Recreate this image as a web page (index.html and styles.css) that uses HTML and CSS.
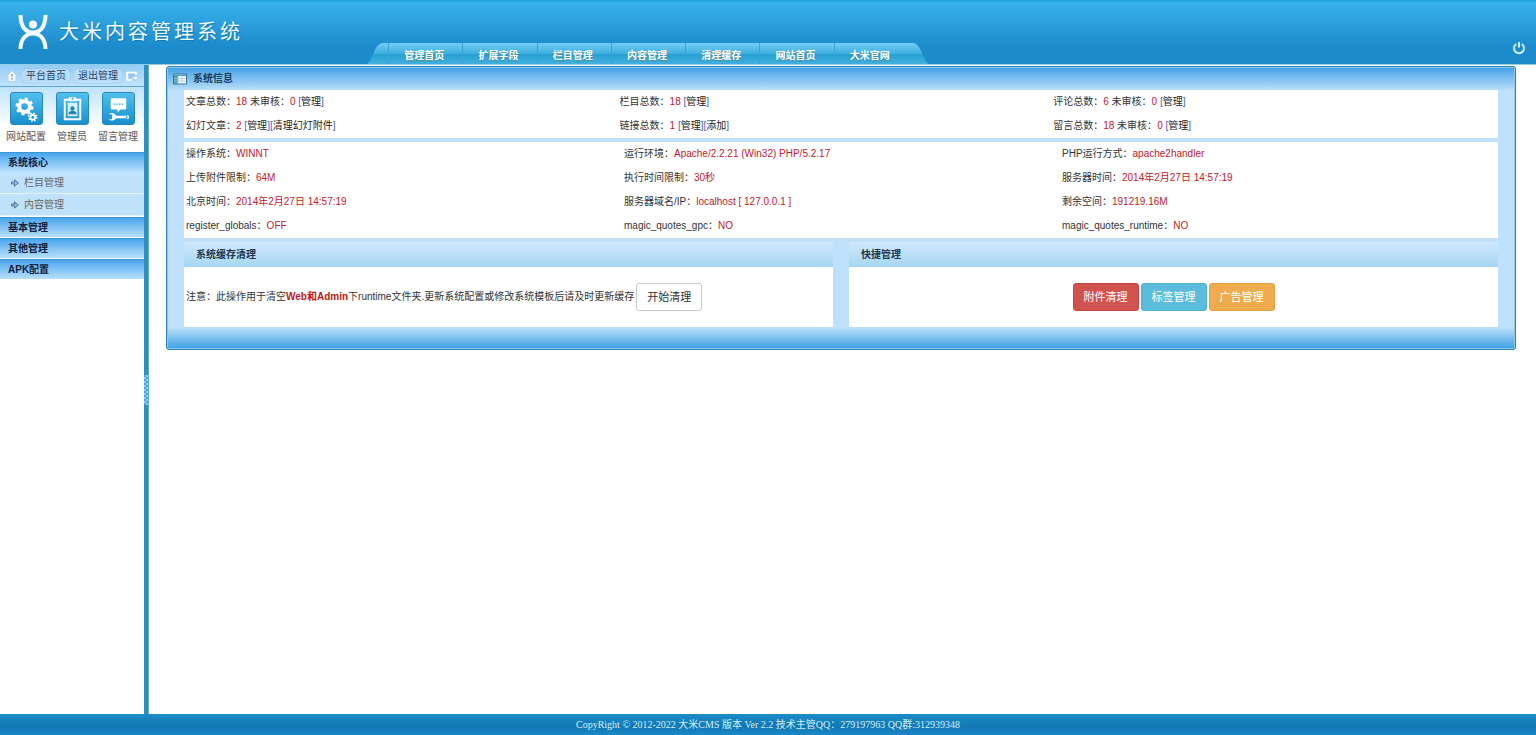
FILE: index.html
```html
<!DOCTYPE html>
<html lang="zh-CN">
<head>
<meta charset="utf-8">
<title>大米内容管理系统</title>
<link rel="stylesheet" href="styles.css">
</head>
<body>
<header class="header">
  <div class="brand">
    <svg class="logo" viewBox="0 0 30 34" aria-hidden="true">
      <path d="M2.500 0C2.500 12 8 17.500 15 17.500S27.500 12 27.500 0M2.500 34C2.500 24 8 18.500 15 18.500S27.500 24 27.500 34" fill="none" stroke="#f4fcff" stroke-width="4"/>
      <circle cx="15" cy="9.500" r="4" fill="#f4fcff"/>
    </svg>
    <h1 class="title">大米内容管理系统</h1>
  </div>
  <nav class="nav">
    <svg class="nav-end" viewBox="0 0 21 21" preserveAspectRatio="none" aria-hidden="true">
      <defs><linearGradient id="tab" x1="0" y1="0" x2="0" y2="1"><stop offset="0" stop-color="#72ccf6"/><stop offset=".5" stop-color="#3fb0df"/><stop offset=".55" stop-color="#27a0d2"/><stop offset="1" stop-color="#41b0df"/></linearGradient></defs>
      <path d="M0 21C6 18 7 0 16 0H21V21Z" fill="url(#tab)"/>
    </svg>
    <ul class="tabs">
      <li><a href="#">管理首页</a></li>
      <li><a href="#">扩展字段</a></li>
      <li><a href="#">栏目管理</a></li>
      <li><a href="#">内容管理</a></li>
      <li><a href="#">清理缓存</a></li>
      <li><a href="#">网站首页</a></li>
      <li><a href="#">大米官网</a></li>
    </ul>
    <svg class="nav-end" viewBox="0 0 21 21" preserveAspectRatio="none" aria-hidden="true">
      <path d="M21 21C15 18 13 0 5 0H0V21Z" fill="url(#tab)"/>
    </svg>
  </nav>
  <button class="power" type="button" aria-label="退出">
    <svg viewBox="0 0 14 14"><path d="M4.300 3A5 5 0 1 0 9.700 3M7 1V6.500" fill="none" stroke="#c9eefc" stroke-width="2"/></svg>
  </button>
</header>

<div class="body">
  <aside class="sidebar">
    <div class="quickbar">
      <svg class="mini" viewBox="0 0 12 12" aria-hidden="true"><path d="M.5 6.500 6 .8 11.500 6.500H9.800V11.300H2.200V6.500Z" fill="#fff" stroke="#a5cbe6" stroke-width=".7"/><path d="M6 4V6.500M6 8V9.500" stroke="#5a9fd0" stroke-width="1.500" fill="none"/></svg>
      <a class="pill" href="#">平台首页</a>
      <a class="pill" href="#">退出管理</a>
      <svg class="mini" viewBox="0 0 12 12" aria-hidden="true"><path d="M10 5V2.500H1V10H6" fill="none" stroke="#fff" stroke-width="1.500"/><path d="M3 5H8M3 7.500H6" stroke="#7fb4dc"/><path d="M6 7H9V5L12 8 9 11V9H6Z" fill="#fff" stroke="#7fb4dc" stroke-width=".5"/></svg>
    </div>
    <div class="shortcuts">
      <a class="shortcut" href="#">
        <svg class="tile" viewBox="0 0 32 32" aria-hidden="true"><g fill="none" stroke="#fff"><circle cx="14" cy="14" r="5.500" stroke-width="4"/><circle cx="14" cy="14" r="8" stroke-width="2.600" stroke-dasharray="3.100 3.180"/><circle cx="22.500" cy="25" r="2.500" stroke-width="1.800"/><circle cx="22.500" cy="25" r="4" stroke-width="1.600" stroke-dasharray="1.600 1.540"/></g></svg>
        <span>网站配置</span>
      </a>
      <a class="shortcut" href="#">
        <svg class="tile" viewBox="0 0 32 32" aria-hidden="true"><path d="M8 7H24V27H8Z" fill="none" stroke="#fff" stroke-width="2"/><path d="M11 10H21V24H11Z" fill="#d9f3fc"/><path d="M12 4.500H20V8.500H12Z" fill="#fff"/><circle cx="16" cy="6" r="1" fill="#2aa4dc"/><circle cx="16" cy="16" r="2.200" fill="#1687c0"/><path d="M12 22V20Q16 16 20 20V22Z" fill="#1687c0"/></svg>
        <span>管理员</span>
      </a>
      <a class="shortcut" href="#">
        <svg class="tile" viewBox="0 0 32 32" aria-hidden="true"><path d="M9 5.500H23Q24 5.500 24 6.500V16Q24 17 23 17H18L15 20V17H9Q8 17 8 16V6.500Q8 5.500 9 5.500Z" fill="#fff"/><path d="M11 11.500H21" stroke="#2aa4dc" stroke-width="1.500" stroke-dasharray="1.500 1.300"/><path d="M6 22H9.500V27H6Q8 29 11 28L14 26H24Q27 28 27 25T24 23.500H14L11 21Q8 20 6 22Z" fill="#fff"/><circle cx="24.500" cy="25" r="1" fill="#2aa4dc"/></svg>
        <span>留言管理</span>
      </a>
    </div>
    <nav class="menu">
      <h2 class="menu-head">系统核心</h2>
      <ul class="menu-list">
        <li><a href="#"><svg class="arrow" viewBox="0 0 8 8" aria-hidden="true"><path d="M.5 3H3.500V.8L7.300 4 3.500 7.200V5H.5Z" fill="#8fb6dc" stroke="#49709a" stroke-width=".9"/></svg>栏目管理</a></li>
        <li><a href="#"><svg class="arrow" viewBox="0 0 8 8" aria-hidden="true"><path d="M.5 3H3.500V.8L7.300 4 3.500 7.200V5H.5Z" fill="#8fb6dc" stroke="#49709a" stroke-width=".9"/></svg>内容管理</a></li>
      </ul>
      <h2 class="menu-head">基本管理</h2>
      <h2 class="menu-head">其他管理</h2>
      <h2 class="menu-head">APK配置</h2>
    </nav>
  </aside>
  <div class="divider"><button class="handle" type="button" aria-label="收起侧栏"></button></div>

  <main class="main">
    <section class="panel">
      <h2 class="panel-head">
        <svg class="grid-icon" viewBox="0 0 14 12" aria-hidden="true"><path d="M.5 1H13.500V11H.5Z" fill="#f5faff" stroke="#3e7398"/><path d="M1 1.500H13V3H1ZM1 3H5V11H1Z" fill="#4b9fbe"/><path d="M1 5.500H13M1 8H13M5 3V11M9 3V11" stroke="#a9c6d8" stroke-width=".7"/></svg>
        系统信息
      </h2>
      <div class="panel-body">
        <table class="info counts">
          <tr>
            <td>文章总数：<b>18</b> 未审核：<b>0</b> <i>[</i><a href="#">管理</a><i>]</i></td>
            <td>栏目总数：<b>18</b> <i>[</i><a href="#">管理</a><i>]</i></td>
            <td>评论总数：<b>6</b> 未审核：<b>0</b> <i>[</i><a href="#">管理</a><i>]</i></td>
          </tr>
          <tr>
            <td>幻灯文章：<b>2</b> <i>[</i><a href="#">管理</a><i>][</i><a href="#">清理幻灯附件</a><i>]</i></td>
            <td>链接总数：<b>1</b> <i>[</i><a href="#">管理</a><i>][</i><a href="#">添加</a><i>]</i></td>
            <td>留言总数：<b>18</b> 未审核：<b>0</b> <i>[</i><a href="#">管理</a><i>]</i></td>
          </tr>
        </table>
        <table class="info">
          <tr>
            <td>操作系统：<b>WINNT</b></td>
            <td>运行环境：<b>Apache/2.2.21 (Win32) PHP/5.2.17</b></td>
            <td>PHP运行方式：<b>apache2handler</b></td>
          </tr>
          <tr>
            <td>上传附件限制：<b>64M</b></td>
            <td>执行时间限制：<b>30秒</b></td>
            <td>服务器时间：<b>2014年2月27日 14:57:19</b></td>
          </tr>
          <tr>
            <td>北京时间：<b>2014年2月27日 14:57:19</b></td>
            <td>服务器域名/IP：<b>localhost [ 127.0.0.1 ]</b></td>
            <td>剩余空间：<b>191219.16M</b></td>
          </tr>
          <tr>
            <td>register_globals：<b>OFF</b></td>
            <td>magic_quotes_gpc：<b>NO</b></td>
            <td>magic_quotes_runtime：<b>NO</b></td>
          </tr>
        </table>
        <div class="cards">
          <section class="card">
            <h3 class="card-head">系统缓存清理</h3>
            <div class="card-body">
              <p class="note">注意：此操作用于清空<strong>Web和Admin</strong>下runtime文件夹.更新系统配置或修改系统模板后请及时更新缓存</p>
              <button class="btn" type="button">开始清理</button>
            </div>
          </section>
          <section class="card">
            <h3 class="card-head">快捷管理</h3>
            <div class="card-body centered">
              <button class="btn red" type="button">附件清理</button>
              <button class="btn cyan" type="button">标签管理</button>
              <button class="btn orange" type="button">广告管理</button>
            </div>
          </section>
        </div>
      </div>
    </section>
  </main>
</div>

<footer class="footer">CopyRight © 2012-2022 大米CMS 版本 Ver 2.2 技术主管QQ：279197963 QQ群:312939348</footer>
</body>
</html>
```
FILE: styles.css
```css
* { box-sizing: border-box; }

body {
  margin: 0;
  min-height: 100vh;
  display: flex;
  flex-direction: column;
  background: #fff;
  color: #333;
  font: 10px/16px "Liberation Sans", "Noto Sans CJK SC", sans-serif;
}

h1, h2, h3, p, ul { margin: 0; padding: 0; }
h2, h3 { font-size: 10px; }
ul { list-style: none; }
a { color: inherit; text-decoration: none; }
svg { display: block; flex: none; }
button { font-family: inherit; cursor: pointer; }

/* Header */
.header {
  height: 65px;
  display: flex;
  align-items: flex-end;
  border-bottom: 1px solid #8fcdea;
  background: linear-gradient(#1f9fdc 0, #37b2ea 3px, #2b9fdb 24px, #1c8acb 48px, #1c8acb 100%);
}
.brand {
  flex: 0 0 367px;
  height: 64px;
  padding-left: 18px;
  display: flex;
  align-items: center;
  gap: 11px;
}
.logo { width: 30px; height: 34px; }
.title {
  color: #eefaff;
  font-size: 20px;
  line-height: 28px;
  font-weight: 400;
  letter-spacing: 3px;
  text-shadow: 1px 1px 1px #1676b0;
}
.nav { display: flex; height: 21px; flex: 1; }
.nav-end { width: 21px; height: 21px; }
.tabs {
  flex: 0 0 520px;
  display: flex;
  background: linear-gradient(#72ccf6, #3fb0df 50%, #27a0d2 55%, #41b0df);
}
.tabs li { flex: 1; border-left: 1px solid #3ba2d6; }
.tabs a {
  display: block;
  padding-right: 3px;
  text-align: center;
  line-height: 25px;
  color: #fff;
  font-weight: 700;
  text-shadow: 0 1px 1px #4c8a8f;
}
.power { margin: 0 10px 9px; padding: 0; border: 0; background: none; }
.power svg { width: 14px; height: 14px; }

/* Sidebar */
.body { flex: 1; display: flex; }
.sidebar { flex: 0 0 144px; }
.quickbar {
  height: 22px;
  padding: 0 6px;
  display: flex;
  align-items: center;
  justify-content: space-between;
  background: linear-gradient(#94cbf5, #bfe2fb);
  border-bottom: 1px solid #5aa7d8;
}
.mini { width: 12px; height: 12px; }
.pill {
  padding: 0 4px;
  line-height: 14px;
  border-radius: 4px;
  background: #b9dcf7;
  box-shadow: 0 0 1px #5f9dcc;
  color: #24436b;
}
.shortcuts {
  height: 65px;
  padding: 5px 3px 0;
  display: flex;
  background: linear-gradient(#bfe3fc, #fff 60%);
}
.shortcut {
  flex: 1;
  display: flex;
  flex-direction: column;
  align-items: center;
  gap: 4px;
  white-space: nowrap;
  color: #555;
}
.tile {
  width: 33px;
  height: 33px;
  border: 1px solid #2786bd;
  border-radius: 3px;
  background: linear-gradient(#50c0ee, #1790cf);
}
.menu-head {
  height: 20px;
  margin-bottom: 1px;
  padding-left: 8px;
  line-height: 19px;
  color: #10203c;
  border-top: 1px solid #3b93d0;
  background: linear-gradient(#49a5ee, #b9e0fa);
}
.menu-head:first-child { margin-bottom: 0; }
.menu-list { margin-bottom: 1px; }
.menu-list a {
  height: 22px;
  padding-left: 11px;
  display: flex;
  align-items: center;
  gap: 5px;
  color: #666;
  background: #bfe1fa;
  border-bottom: 1px solid #e3f3fe;
}
.arrow { width: 8px; height: 8px; }

.divider {
  flex: 0 0 5px;
  display: flex;
  align-items: center;
  background: #318fbe;
  border-right: 1px solid #62acd0;
}
.handle {
  width: 4px;
  height: 30px;
  padding: 0;
  border: 0;
  background: repeating-conic-gradient(#8fcdf2 0 25%, #4fa6dc 0 50%) 0 0 / 4px 4px;
}

/* Main panel */
.main { flex: 1; min-width: 0; padding: 1px 20px 0 17px; }
.panel {
  padding: 0 17px;
  border: 1px solid #2f83b5;
  border-radius: 3px;
  box-shadow: inset 0 0 0 1px #8cc9f0;
  background:
    linear-gradient(#3f9fe6, #bfe1fb) top / 100% 24px no-repeat,
    linear-gradient(#bfe1fb, #3b9fe4) bottom / 100% 22px no-repeat,
    #bfe1fb;
}
.panel-head {
  height: 23px;
  margin-left: -11px;
  display: flex;
  align-items: center;
  gap: 6px;
  color: #1c3c58;
}
.grid-icon { width: 14px; height: 12px; }
.panel-body { display: flex; flex-direction: column; gap: 4px; padding-bottom: 22px; }
.info {
  width: 100%;
  table-layout: fixed;
  border-collapse: collapse;
  background: #fff;
}
.info td { height: 24px; padding: 0 2px; }
.counts td { width: 33%; }
.counts td:last-child { width: 34%; }
.info b { font-weight: 400; color: #c0202c; }
.info i { font-style: normal; color: #3c5fc4; }
.info a { color: #222; }

.cards { display: grid; grid-template-columns: 1fr 1fr; gap: 16px; }
.card-head {
  padding-left: 12px;
  line-height: 25px;
  color: #22384c;
  background: linear-gradient(#d0e8fc, #a6d6f2);
}
.card-body {
  height: 60px;
  padding: 0 2px;
  display: flex;
  align-items: center;
  gap: 2px;
  background: #fff;
}
.centered { justify-content: center; }
.note { white-space: nowrap; }
.note strong { color: #c01818; }
.btn {
  height: 28px;
  padding: 0 10px;
  border: 1px solid #ccc;
  border-radius: 3px;
  background: #fff;
  color: #333;
  font-size: 11px;
  line-height: 16px;
}
.red { background: #d0534f; border-color: #c54743; color: #fff; }
.cyan { background: #5bbcdb; border-color: #4bb2d4; color: #fff; }
.orange { background: #edac4e; border-color: #e6a13c; color: #fff; }

.footer {
  height: 21px;
  line-height: 21px;
  text-align: center;
  color: #d5f0f6;
  font-family: "Liberation Serif", "Noto Sans CJK SC", serif;
  background: linear-gradient(#1c8cc8, #1278b4 60%, #1a88c6);
}
```
